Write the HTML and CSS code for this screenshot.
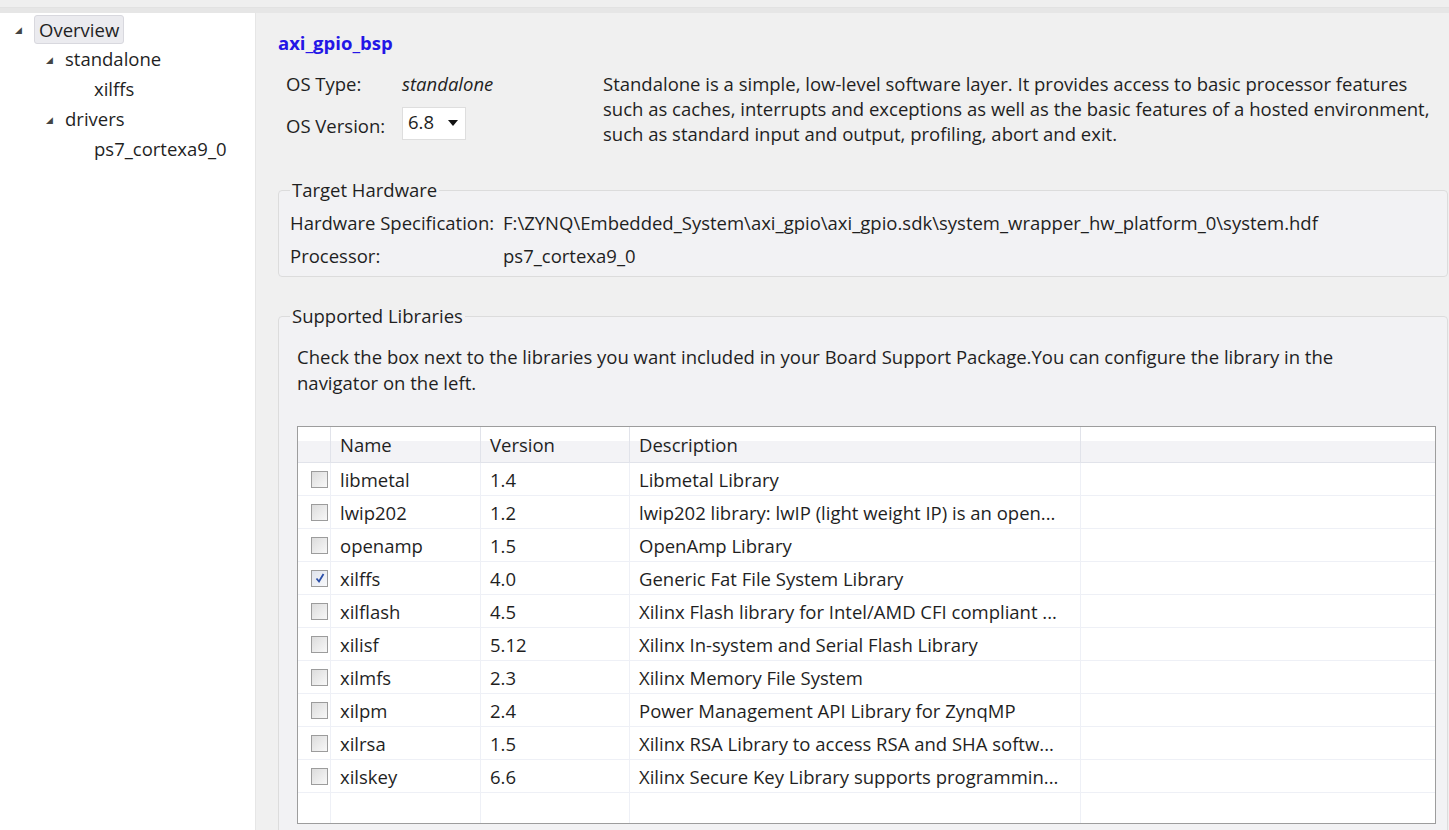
FILE: index.html
```html
<!DOCTYPE html>
<html>
<head>
<meta charset="utf-8">
<link rel="stylesheet" href="styles.css">
</head>
<body>
<div class="topstrip"></div>
<div class="main">
  <aside class="tree">
    <div class="node l1"><span class="tw">◢</span><span class="label sel">Overview</span></div>
    <div class="node l2"><span class="tw">◢</span><span class="label">standalone</span></div>
    <div class="node l3"><span class="label">xilffs</span></div>
    <div class="node l2"><span class="tw">◢</span><span class="label">drivers</span></div>
    <div class="node l3"><span class="label">ps7_cortexa9_0</span></div>
  </aside>
  <section class="content">
    <h1 class="title">axi_gpio_bsp</h1>
    <div class="os">
      <div class="os-left">
        <div class="os-row"><span class="os-key">OS Type:</span><span class="os-val">standalone</span></div>
        <div class="os-row"><span class="os-key">OS Version:</span>
          <span class="combo"><span>6.8</span><svg width="10" height="6" viewBox="0 0 10 6"><path d="M0 0H10L5 6Z" fill="#111"/></svg></span>
        </div>
      </div>
      <p class="os-desc">Standalone is a simple, low-level software layer. It provides access to basic processor features such as caches, interrupts and exceptions as well as the basic features of a hosted environment, such as standard input and output, profiling, abort and exit.</p>
    </div>

    <fieldset class="group hw">
      <legend>Target Hardware</legend>
      <div class="hw-row"><span class="hw-key">Hardware Specification:</span><span>F:\ZYNQ\Embedded_System\axi_gpio\axi_gpio.sdk\system_wrapper_hw_platform_0\system.hdf</span></div>
      <div class="hw-row"><span class="hw-key">Processor:</span><span>ps7_cortexa9_0</span></div>
    </fieldset>

    <fieldset class="group libs">
      <legend>Supported Libraries</legend>
      <p class="libs-desc">Check the box next to the libraries you want included in your Board Support Package.You can configure the library in the navigator on the left.</p>
      <div class="table">
        <div class="row head">
          <div class="c cb"></div><div class="c name">Name</div><div class="c ver">Version</div><div class="c desc">Description</div><div class="c rest"></div>
        </div>
        <div class="row"><div class="c cb"><span class="box"></span></div><div class="c name">libmetal</div><div class="c ver">1.4</div><div class="c desc">Libmetal Library</div><div class="c rest"></div></div>
        <div class="row"><div class="c cb"><span class="box"></span></div><div class="c name">lwip202</div><div class="c ver">1.2</div><div class="c desc">lwip202 library: lwIP (light weight IP) is an open...</div><div class="c rest"></div></div>
        <div class="row"><div class="c cb"><span class="box"></span></div><div class="c name">openamp</div><div class="c ver">1.5</div><div class="c desc">OpenAmp Library</div><div class="c rest"></div></div>
        <div class="row"><div class="c cb"><span class="box checked"><svg width="12" height="12" viewBox="0 0 12 12"><path d="M2.5 6.5L5 9.5L9.5 2" fill="none" stroke="#2b4fa8" stroke-width="1.8"/></svg></span></div><div class="c name">xilffs</div><div class="c ver">4.0</div><div class="c desc">Generic Fat File System Library</div><div class="c rest"></div></div>
        <div class="row"><div class="c cb"><span class="box"></span></div><div class="c name">xilflash</div><div class="c ver">4.5</div><div class="c desc">Xilinx Flash library for Intel/AMD CFI compliant ...</div><div class="c rest"></div></div>
        <div class="row"><div class="c cb"><span class="box"></span></div><div class="c name">xilisf</div><div class="c ver">5.12</div><div class="c desc">Xilinx In-system and Serial Flash Library</div><div class="c rest"></div></div>
        <div class="row"><div class="c cb"><span class="box"></span></div><div class="c name">xilmfs</div><div class="c ver">2.3</div><div class="c desc">Xilinx Memory File System</div><div class="c rest"></div></div>
        <div class="row"><div class="c cb"><span class="box"></span></div><div class="c name">xilpm</div><div class="c ver">2.4</div><div class="c desc">Power Management API Library for ZynqMP</div><div class="c rest"></div></div>
        <div class="row"><div class="c cb"><span class="box"></span></div><div class="c name">xilrsa</div><div class="c ver">1.5</div><div class="c desc">Xilinx RSA Library to access RSA and SHA softw...</div><div class="c rest"></div></div>
        <div class="row"><div class="c cb"><span class="box"></span></div><div class="c name">xilskey</div><div class="c ver">6.6</div><div class="c desc">Xilinx Secure Key Library supports programmin...</div><div class="c rest"></div></div>
        <div class="row empty"><div class="c cb"></div><div class="c name"></div><div class="c ver"></div><div class="c desc"></div><div class="c rest"></div></div>
      </div>
    </fieldset>
  </section>
</div>
</body>
</html>
```

FILE: styles.css
```css
* { box-sizing: border-box; }
html, body { margin: 0; padding: 0; }
body {
  width: 1449px;
  height: 830px;
  overflow: hidden;
  background: #eeeeee;
  font-family: "Open Sans", "Noto Sans", sans-serif;
  font-size: 18.5px;
  color: #1f1f1f;
}
.topstrip {
  height: 8px;
  background: #efefef;
  border-bottom: 1px solid #e2e2e2;
}
.main {
  display: flex;
  height: 822px;
  background: #e6e6e6;
  padding-top: 5px;
}
.tree {
  width: 255px;
  flex: none;
  background: #ffffff;
  padding-top: 1px;
}
.node {
  display: flex;
  align-items: center;
  height: 30px;
}
.node.l1 { padding-left: 15px; }
.node.l2 { padding-left: 46px; }
.node.l3 { padding-left: 94px; }
.tw {
  font-size: 9px;
  color: #444;
  width: 19px;
  line-height: 1;
}
.label { line-height: 26px; }
.label.sel {
  background: #ebebef;
  border: 1px solid #d8d8de;
  border-radius: 3px;
  padding: 0 4px;
  height: 29px;
  line-height: 27px;
}
.content {
  flex: 1;
  background: #f0f0f0;
  padding: 15px 2px 0 22px;
  margin-left: 1px;
}
.title {
  margin: 0;
  font-size: 18.5px;
  font-weight: bold;
  color: #2416e6;
  height: 36px;
  line-height: 30px;
}
.os {
  display: flex;
  padding-left: 8px;
  margin-top: 5px;
}
.os-left { width: 317px; flex: none; }
.os-row {
  display: flex;
  align-items: center;
}
.os-row:first-child { height: 28px; }
.os-row:nth-child(2) { height: 56px; }
.os-key { width: 116px; }
.os-val { font-style: italic; }
.combo {
  display: inline-flex;
  align-items: center;
  justify-content: space-between;
  width: 64px;
  height: 33px;
  background: #fff;
  border: 1px solid #dedede;
  padding: 0 7px 4px 5px;
  margin-top: -4px;
}
.combo svg { margin-top: 4px; }
.os-desc {
  margin: 2px 0 0;
  line-height: 25px;
  flex: 1;
}
.group {
  margin: 0;
  border: 1px solid #dcdcdc;
  border-radius: 4px;
  background: #f2f2f4;
  padding: 0 10px 0 11px;
  min-width: 0;
}
.group legend {
  padding: 0 2px;
  margin-left: 0;
  line-height: 22px;
}
.hw { margin-top: 26px; padding-bottom: 4px; }
.hw-row {
  display: flex;
  height: 33px;
  align-items: center;
}
.hw-row:first-of-type { margin-top: 5px; }
.hw-key { width: 213px; flex: none; }
.libs { margin-top: 28px; height: 540px; padding: 0 11px 0 18px; }
.libs legend { margin-left: -7px; }
.libs-desc {
  margin: 17px 0 30px;
  line-height: 26px;
  padding-right: 40px;
}
.table {
  background: #fff;
  border: 1px solid #9d9d9d;
  width: 1139px;
  margin-left: 0;
}
.row {
  display: flex;
  height: 33px;
  border-bottom: 1px solid #eef0f6;
}
.row.head {
  height: 36px;
  background: linear-gradient(#ffffff 0%, #ffffff 40%, #f3f3f6 41%, #f3f3f6 100%);
  border-bottom: 1px solid #e1e3ea;
}
.row.empty { height: 30px; border-bottom: none; }
.c {
  display: flex;
  align-items: center;
  padding-left: 9px;
  border-right: 1px solid #eef0f6;
  white-space: nowrap;
  overflow: hidden;
}
.head .c { border-right: 1px solid #e1e3ea; }
.c.cb { width: 33px; padding-left: 13px; }
.c.name { width: 150px; }
.c.ver { width: 149px; }
.c.desc { width: 451px; }
.c.rest { flex: 1; border-right: none; }
.box {
  width: 17px;
  height: 17px;
  border: 1px solid #9c9c9c;
  background: linear-gradient(135deg, #dcdcdc, #f8f8f8);
  display: inline-flex;
  align-items: center;
  justify-content: center;
}
.box.checked { background: linear-gradient(135deg, #dfe3ec, #f8f9fb); }
```
